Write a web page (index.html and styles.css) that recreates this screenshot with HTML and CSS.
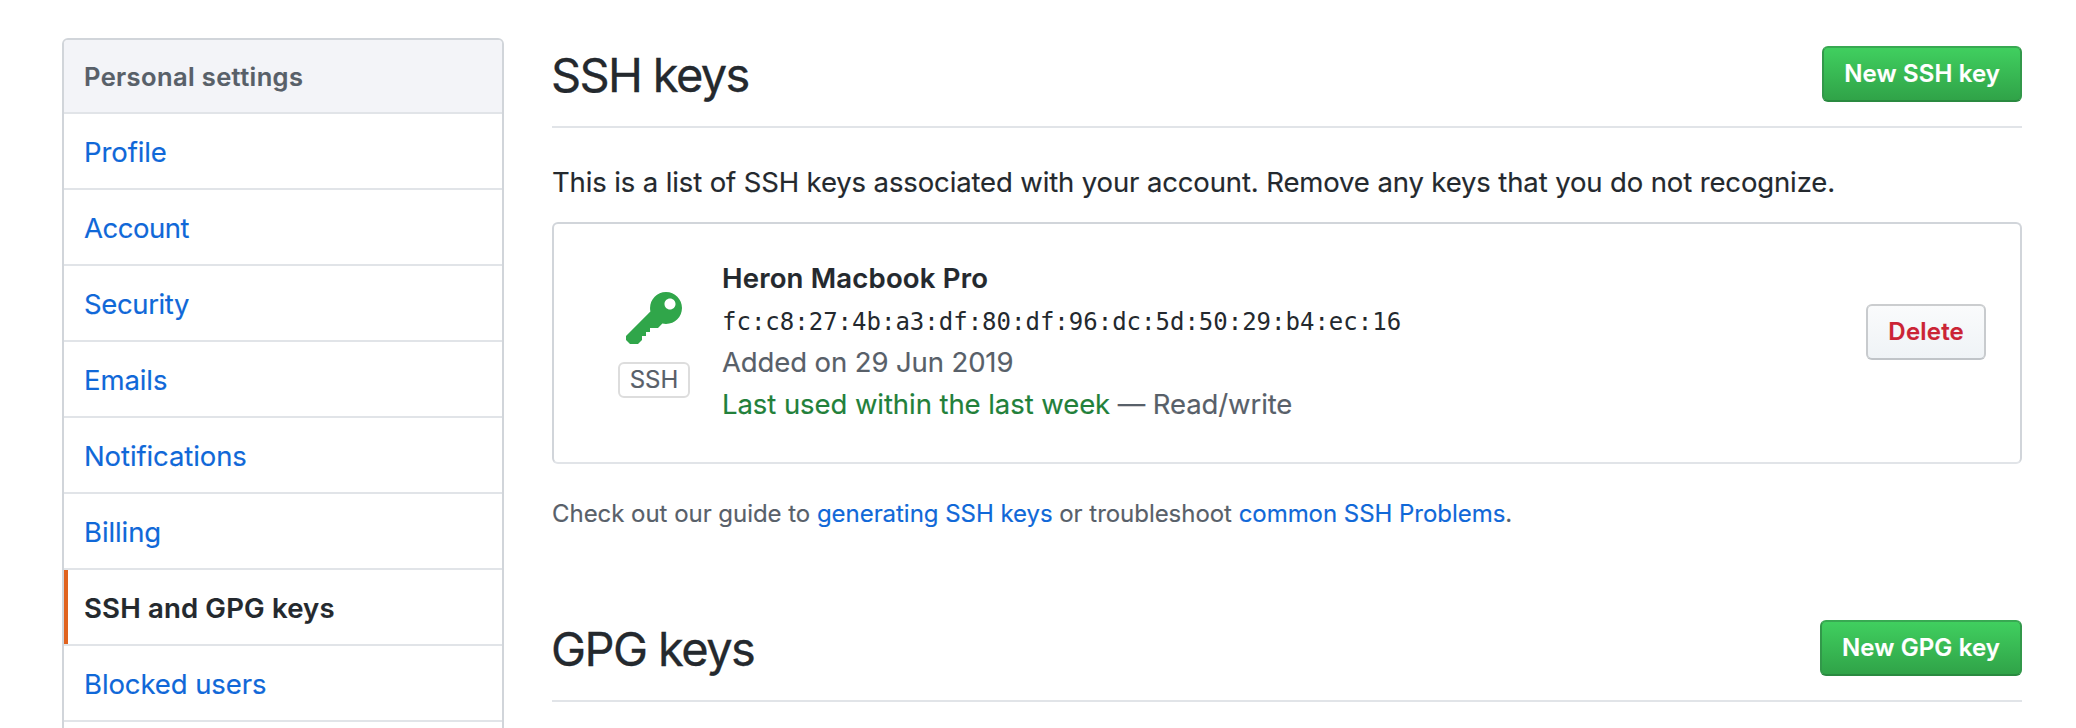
FILE: index.html
```
<!DOCTYPE html>
<html lang="en">
<head>
<meta charset="utf-8">
<title>SSH and GPG keys</title>
<link rel="stylesheet" href="styles.css">
</head>
<body>
<div class="page">
  <nav class="menu">
    <h3 class="menu-heading">Personal settings</h3>
    <a class="menu-item" href="#">Profile</a>
    <a class="menu-item tighter" href="#">Account</a>
    <a class="menu-item tight" href="#">Security</a>
    <a class="menu-item" href="#">Emails</a>
    <a class="menu-item" href="#">Notifications</a>
    <a class="menu-item" href="#">Billing</a>
    <a class="menu-item selected" href="#">SSH and GPG keys</a>
    <a class="menu-item" href="#">Blocked users</a>
    <a class="menu-item" href="#"></a>
  </nav>
  <main class="content">
    <header class="subhead">
      <h2 class="subhead-title">SSH keys</h2>
      <a class="btn btn-primary" href="#">New SSH key</a>
    </header>
    <p class="intro">This is a list of SSH keys associated with your account. Remove any keys that you do not recognize.</p>
    <section class="key-card">
      <div class="key-type">
        <svg class="key-icon" viewBox="0 0 14 16" width="56" height="64" aria-hidden="true"><path fill-rule="evenodd" d="M12.83 2.17C12.08 1.42 11.14 1.03 10 1c-1.13.03-2.08.42-2.83 1.17S6.04 3.86 6.01 5c0 .3.03.59.09.89L0 12v1l1 1h2l1-1v-1h1v-1h1v-1h2l1.09-1.11c.3.08.59.11.91.11 1.14-.03 2.08-.42 2.83-1.17S13.97 6.14 14 5c-.03-1.14-.42-2.08-1.17-2.83zM11 5.38c-.77 0-1.38-.61-1.38-1.38 0-.77.61-1.38 1.38-1.38.77 0 1.38.61 1.38 1.38 0 .77-.61 1.38-1.38 1.38z"/></svg>
        <span class="key-label">SSH</span>
      </div>
      <div class="key-info">
        <strong class="key-name">Heron Macbook Pro</strong>
        <code class="fingerprint">fc:c8:27:4b:a3:df:80:df:96:dc:5d:50:29:b4:ec:16</code>
        <span class="key-added">Added on 29 Jun 2019</span>
        <span class="key-usage"><span class="recent">Last used within the last week</span> — Read/write</span>
      </div>
      <a class="btn btn-danger" href="#">Delete</a>
    </section>
    <p class="guide">Check out our guide to <a href="#">generating SSH keys</a> or troubleshoot <a href="#">common SSH Problems</a>.</p>
    <header class="subhead">
      <h2 class="subhead-title gpg">GPG keys</h2>
      <a class="btn btn-primary" href="#">New GPG key</a>
    </header>
  </main>
</div>
</body>
</html>
```
FILE: styles.css
```
* { box-sizing: border-box; }
body {
  margin: 0;
  background: #fff;
  color: #24292e;
  font: 400 27.5px/42px Inter, "Liberation Sans", sans-serif;
  -webkit-text-stroke: .15px;
}
h2, h3, p { margin: 0; }
a { color: #1068d8; text-decoration: none; }
.page {
  display: grid;
  grid-template-columns: 442px 1470px;
  column-gap: 48px;
  height: 728px;
  padding: 38px 54px 0 62px;
  overflow: hidden;
}

/* Side menu */
.menu {
  align-self: start;
  border: 2px solid #d1d5da;
  border-radius: 6px;
  overflow: hidden;
}
.menu-heading {
  height: 74px;
  padding: 1px 20px 0;
  background: #f3f4f8;
  border-bottom: 2px solid #e1e4e8;
  color: #586069;
  font-size: 25.5px;
  font-weight: 600;
  line-height: 72px;
  letter-spacing: .38px;
}
.menu-item {
  display: block;
  height: 76px;
  padding: 1px 20px 0;
  border-bottom: 2px solid #e1e4e8;
  line-height: 74px;
  letter-spacing: -.1px;
}
.tight { letter-spacing: -.37px; }
.tighter { letter-spacing: -.5px; }
.selected {
  color: #24292e;
  font-weight: 600;
  letter-spacing: .18px;
  box-shadow: inset 4px 0 #e0631f;
}

/* Section headings */
.subhead {
  display: flex;
  justify-content: space-between;
  align-items: flex-start;
  height: 90px;
  border-bottom: 2px solid #e1e4e8;
}
.subhead-title {
  margin-left: -1px;
  padding-top: 1px;
  font-size: 47px;
  font-weight: 400;
  line-height: 72px;
  letter-spacing: -1.65px;
  -webkit-text-stroke: .3px;
}
.subhead-title.gpg { letter-spacing: -1.57px; }
.btn {
  height: 56px;
  padding: 0 20px;
  border: 2px solid;
  border-radius: 6px;
  font-size: 24px;
  font-weight: 600;
  line-height: 52px;
  letter-spacing: .12px;
}
.subhead .btn { margin-top: 8px; }
.btn-primary {
  border-color: #38a952 #32984a #2a8a40;
  background: linear-gradient(#40cf5f, #30a348);
  color: #fff;
}

/* Key card */
.intro { padding-top: 33px; letter-spacing: -.13px; }
.key-card {
  display: flex;
  height: 242px;
  margin-top: 19px;
  padding: 0 34px 0 64px;
  border: 2px solid #d1d5da;
  border-bottom-color: #e1e4e8;
  border-radius: 6px;
}
.key-type {
  display: flex;
  flex-direction: column;
  align-items: center;
  width: 72px;
  padding-top: 64px;
}
.key-icon { fill: #30a64a; }
.key-label {
  width: 72px;
  height: 36px;
  margin-top: 10px;
  border: 2px solid #ddd;
  border-radius: 6px;
  color: #586069;
  font-size: 24px;
  line-height: 32px;
  text-align: center;
}
.key-info {
  display: flex;
  flex: 1;
  flex-direction: column;
  padding: 33px 0 0 32px;
  color: #586069;
}
.key-name { color: #24292e; font-weight: 600; letter-spacing: .2px; }
.fingerprint {
  height: 42px;
  color: #24292e;
  font: 24px/46px "DejaVu Sans Mono", monospace;
  -webkit-text-stroke: 0;
}
.key-added { letter-spacing: -.11px; }
.key-usage { letter-spacing: -.1px; }
.recent { color: #22803a; letter-spacing: -.07px; }
.btn-danger {
  margin-top: 80px;
  border-color: #cbcdcf #c8cbce #c0c4c8;
  background: linear-gradient(#fafbfc, #eff3f6);
  color: #cb2435;
  letter-spacing: .2px;
}

.guide {
  margin-bottom: 80px;
  padding-top: 32px;
  color: #586069;
  font-size: 24px;
  line-height: 36px;
  letter-spacing: -.04px;
}
```
